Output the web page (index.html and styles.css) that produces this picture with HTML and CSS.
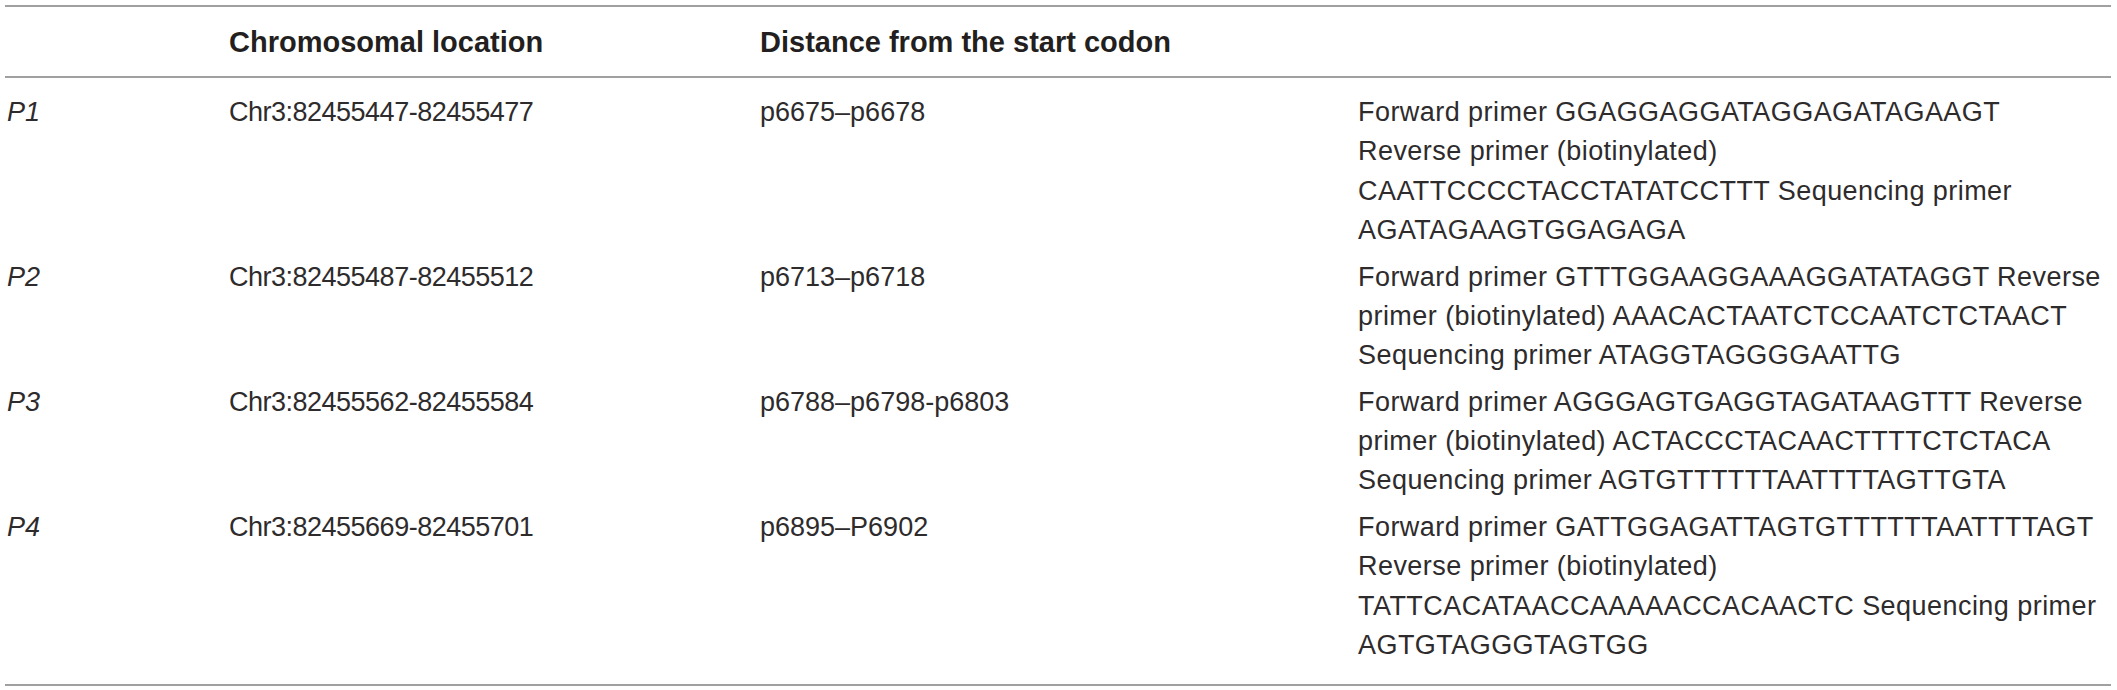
FILE: index.html
```html
<!DOCTYPE html>
<html lang="en">
<head>
<meta charset="utf-8">
<title>Primer table</title>
<link rel="stylesheet" href="styles.css">
</head>
<body>
<table class="data">
  <colgroup>
    <col class="c-id">
    <col class="c-loc">
    <col class="c-dist">
    <col class="c-primer">
  </colgroup>
  <thead>
    <tr>
      <th></th>
      <th>Chromosomal location</th>
      <th>Distance from the start codon</th>
      <th></th>
    </tr>
  </thead>
  <tbody>
    <tr>
      <td class="id">P1</td>
      <td class="loc">Chr3:82455447-82455477</td>
      <td class="dist">p6675–p6678</td>
      <td class="primer">Forward primer GGAGGAGGATAGGAGATAGAAGT<br>Reverse primer (biotinylated)<br>CAATTCCCCTACCTATATCCTTT Sequencing primer<br>AGATAGAAGTGGAGAGA</td>
    </tr>
    <tr>
      <td class="id">P2</td>
      <td class="loc">Chr3:82455487-82455512</td>
      <td class="dist">p6713–p6718</td>
      <td class="primer">Forward primer GTTTGGAAGGAAAGGATATAGGT Reverse<br>primer (biotinylated) AAACACTAATCTCCAATCTCTAACT<br>Sequencing primer ATAGGTAGGGGAATTG</td>
    </tr>
    <tr>
      <td class="id">P3</td>
      <td class="loc">Chr3:82455562-82455584</td>
      <td class="dist">p6788–p6798-p6803</td>
      <td class="primer">Forward primer AGGGAGTGAGGTAGATAAGTTT Reverse<br>primer (biotinylated) ACTACCCTACAACTTTTCTCTACA<br>Sequencing primer AGTGTTTTTTAATTTTAGTTGTA</td>
    </tr>
    <tr>
      <td class="id">P4</td>
      <td class="loc">Chr3:82455669-82455701</td>
      <td class="dist">p6895–P6902</td>
      <td class="primer">Forward primer GATTGGAGATTAGTGTTTTTTAATTTTAGT<br>Reverse primer (biotinylated)<br>TATTCACATAACCAAAAACCACAACTC Sequencing primer<br>AGTGTAGGGTAGTGG</td>
    </tr>
  </tbody>
</table>
</body>
</html>
```

FILE: styles.css
```css
html, body {
  margin: 0;
  padding: 0;
  background: #ffffff;
}

body {
  font-family: "Liberation Sans", Arial, Helvetica, sans-serif;
  color: #231f20;
}

.data {
  margin: 5px 0 0 5px;
  width: 2106px;
  border-collapse: collapse;
  table-layout: fixed;
  border-top: 2px solid #a0a0a0;
  border-bottom: 2px solid #a0a0a0;
}

.c-id { width: 224px; }
.c-loc { width: 531px; }
.c-dist { width: 598px; }
.c-primer { width: 753px; }

.data th {
  height: 69px;
  padding: 0;
  text-align: left;
  vertical-align: middle;
  font-size: 29px;
  font-weight: 700;
  line-height: 34px;
  color: #231f20;
  border-bottom: 2px solid #a0a0a0;
}

.data td {
  padding: 3.7px 0;
  vertical-align: top;
  font-size: 27px;
  line-height: 39.3px;
  white-space: nowrap;
  color: #2e2b2c;
}

.data tbody tr:first-child td {
  padding-top: 15px;
}

.data tbody tr:last-child td {
  padding-bottom: 18.5px;
}

.data td.id {
  font-style: italic;
  padding-left: 2px;
}

.data td.loc {
  letter-spacing: -0.5px;
}

.data td.primer {
  letter-spacing: 0.45px;
}
```
